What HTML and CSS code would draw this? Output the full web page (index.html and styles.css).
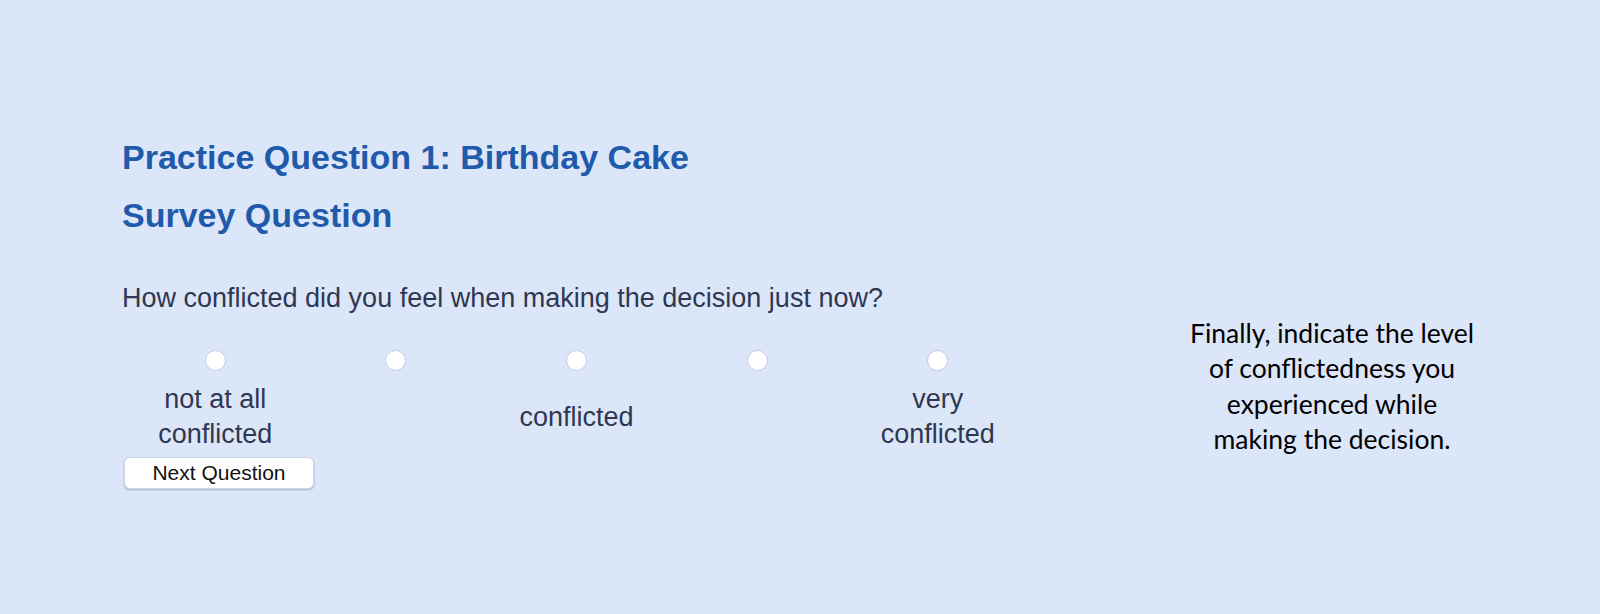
FILE: index.html
```html
<!DOCTYPE html>
<html lang="en">
<head>
<meta charset="utf-8">
<title>Practice Question 1: Birthday Cake</title>
<link rel="stylesheet" href="styles.css">
</head>
<body>
<div class="page">
  <main class="survey">
    <h1 class="title">Practice Question 1: Birthday Cake</h1>
    <h2 class="title sub">Survey Question</h2>
    <p class="question">How conflicted did you feel when making the decision just now?</p>
    <div class="scale">
      <div class="cell"><input type="radio" name="c" class="radio"></div>
      <div class="cell"><input type="radio" name="c" class="radio"></div>
      <div class="cell"><input type="radio" name="c" class="radio"></div>
      <div class="cell"><input type="radio" name="c" class="radio"></div>
      <div class="cell"><input type="radio" name="c" class="radio"></div>
      <div class="label">not at all<br>conflicted</div>
      <div class="label"></div>
      <div class="label">conflicted</div>
      <div class="label"></div>
      <div class="label">very<br>conflicted</div>
    </div>
    <button class="next" type="button">Next Question</button>
  </main>
  <aside class="note">Finally, indicate the level of conflictedness you experienced while making the decision.</aside>
</div>
</body>
</html>
```

FILE: styles.css
```css
html, body {
  margin: 0;
  padding: 0;
}
body {
  background: #dce6f9;
  width: 1600px;
  height: 614px;
  overflow: hidden;
}
.page {
  display: flex;
  align-items: flex-start;
}
.survey {
  width: 1050px;
  padding: 137px 0 0 122px;
  box-sizing: border-box;
  font-family: "Liberation Sans", Arial, sans-serif;
}
.title {
  margin: 0;
  font-size: 34px;
  line-height: 40px;
  font-weight: bold;
  color: #1f5aab;
}
.sub {
  margin-top: 18px;
}
.question {
  margin: 47px 0 0 0;
  font-size: 27px;
  line-height: 32px;
  color: #2f3752;
}
.scale {
  display: grid;
  grid-template-columns: repeat(5, 180.6px);
  margin: 36px 0 0 3px;
  align-items: center;
}
.cell {
  display: flex;
  justify-content: center;
  height: 21px;
}
.radio {
  appearance: none;
  -webkit-appearance: none;
  margin: 0;
  width: 21px;
  height: 21px;
  border-radius: 50%;
  background: #ffffff;
  border: 1.5px solid #c4c9e8;
  box-sizing: border-box;
}
.label {
  margin-top: 11px;
  height: 70px;
  display: flex;
  align-items: center;
  justify-content: center;
  text-align: center;
  font-size: 27px;
  line-height: 35px;
  color: #2f3752;
}
.next {
  display: block;
  margin: 5px 0 0 2px;
  width: 190px;
  height: 32px;
  padding: 0;
  background: #ffffff;
  border: 1px solid #cfd6e6;
  border-radius: 6px;
  box-shadow: 0 1px 2px rgba(60, 70, 110, 0.35);
  font-family: "Liberation Sans", Arial, sans-serif;
  font-size: 21px;
  color: #111111;
}
.note {
  width: 300px;
  margin: 316px 0 0 132px;
  font-family: Lato, "Noto Sans", sans-serif;
  font-size: 26.5px;
  line-height: 35.3px;
  text-align: center;
  color: #000000;
}
```
